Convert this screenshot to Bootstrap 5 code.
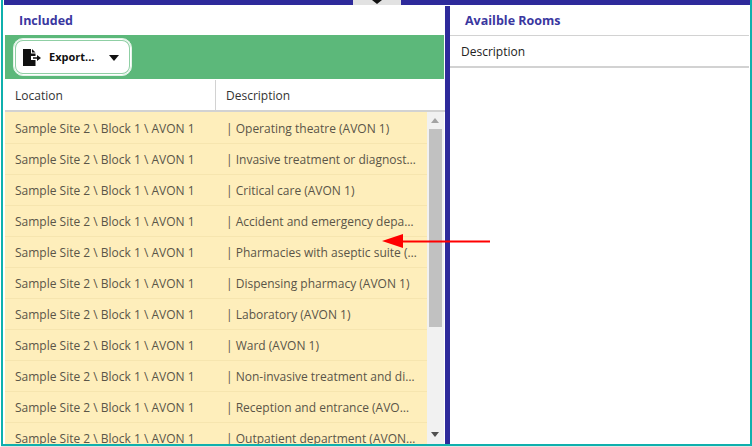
<!DOCTYPE html>
<html><head><meta charset="utf-8">
<link href="https://cdn.jsdelivr.net/npm/bootstrap@5.3.0/dist/css/bootstrap.min.css" rel="stylesheet">
<style>
html,body{height:447px;overflow:hidden;background:#fff}
body{font-family:"Open Sans","Noto Sans",sans-serif;font-size:12px;color:#333}
.frame{width:752px;height:447px;position:relative;background:#fff;border-left:2px solid #fff;border-bottom:1px solid #e4e4e4}
.inner{height:446px;border-left:2px solid #0fb0ad;border-right:2px solid #0fb0ad;border-bottom:2px solid #0fb0ad;margin-left:-1px;display:flex;flex-direction:column}
.topbar{height:5px;background:#2e2a9b;flex:none;margin-left:1px}
.handle{position:absolute;left:351px;top:0;width:48px;height:5px;background:#e2e2e2;overflow:hidden}
.handle i{position:absolute;left:19px;top:0;border:5px solid transparent;border-top:4px solid #111;border-bottom:0}
.panes{flex:1;min-height:0;display:flex}
.leftp{width:442px;padding-left:2px;flex:none;display:flex;flex-direction:column;min-height:0}
.sep{width:5px;background:#2e2a9b;flex:none;margin-top:1px}
.rightp{flex:1;min-width:0;padding-right:1px}
.ttl{height:30px;padding-top:3px;font-size:12.5px;font-weight:700;color:#3a37a0;display:flex;align-items:center;padding-left:14px;flex:none}
.rightp .ttl{padding-left:15px;border-bottom:1px solid #d2d2d2;height:31px;padding-top:2px}
.greenb{height:44px;background:#5cb87a;flex:none;display:flex;align-items:center;padding-left:8px;margin-right:1px}
.expbtn{width:119px;height:38px;background:#fff;border:1px solid #e4f3e9;border-radius:10px;display:flex;align-items:center;padding:1px 0 0 9px;font-size:11px;font-weight:700;color:#111;box-shadow:inset 0 0 0 1px #fff,inset 0 0 0 2px #8fcfa4}
.expbtn span{margin-left:8px}
.expbtn i{margin-left:15px;border:5.5px solid transparent;border-top:6px solid #111;border-bottom:0}
.hdr{height:32px;margin-top:1px;display:flex;border-bottom:2px solid #d2d2d2;flex:none;color:#333}
.hdr div{display:flex;align-items:center;padding-left:10px;padding-top:2px}
.hdr .c1{width:211px;border-right:1px solid #d2d2d2}
.bodyw{flex:1;min-height:0;display:flex;overflow:hidden}
.rows{flex:1;min-width:0;overflow:hidden;background:#feeebb;padding-top:1px}
.rw{height:31px;padding-top:2px;border-bottom:1px solid #f6e5af;display:flex;align-items:center;color:#5a5548}
.rw .c1{width:210px;padding-left:10px;flex:none;white-space:nowrap}
.rw .c2{flex:1;min-width:0;padding-left:11px;padding-right:10px;white-space:nowrap;overflow:hidden;text-overflow:ellipsis}
.sb{width:18px;flex:none;background:#f1f1f1;position:relative;border-right:1px solid #fff}
.sb .th{position:absolute;left:2px;right:2px;top:17px;height:198px;background:#c1c1c1}
.sb .up,.sb .dn{position:absolute;left:4px;border:4px solid transparent}
.sb .up{top:6px;border-top:0;border-bottom:5px solid #a3a3a3}
.sb .dn{bottom:7px;border-bottom:0;border-top:5px solid #505050}
.rhdr{height:32px;padding-top:1px;border-bottom:2px solid #d2d2d2;display:flex;align-items:center;padding-left:11px;color:#222}
.arrow{position:absolute;left:378px;top:232px;width:112px;height:18px;pointer-events:none}
</style></head><body>
<div class="frame"><div class="inner">
<div class="topbar"></div>
<div class="panes">
<div class="leftp">
<div class="ttl">Included</div>
<div class="greenb"><div class="expbtn">
<svg width="18" height="17" viewBox="0 0 18 17"><path d="M0 0h8v4.500h4.500V7H8v4h4.500v6H0z" fill="#111"/><path d="M9 0l3.500 3.500H9z" fill="#111"/><path d="M10 8.300h4V6l4 3-4 3V9.700h-4z" fill="#111"/></svg>
<span>Export...</span><i></i></div></div>
<div class="hdr"><div class="c1">Location</div><div class="c2">Description</div></div>
<div class="bodyw"><div class="rows" id="rows"></div><div class="sb"><div class="up"></div><div class="th"></div><div class="dn"></div></div></div>
</div>
<div class="sep"></div>
<div class="rightp"><div class="ttl">Availble Rooms</div><div class="rhdr">Description</div></div>
</div>
</div>
<div class="handle"><i></i></div>
<svg class="arrow" viewBox="0 0 112 18"><path d="M110 9.500H20" stroke="#f00" stroke-width="2"/><path d="M2 9 23 2v14z" fill="#f00"/></svg>
</div>
<script>
var d=["Operating theatre (AVON 1)","Invasive treatment or diagnostic area (AVON 1)","Critical care (AVON 1)","Accident and emergency department (AVON 1)","Pharmacies with aseptic suite (AVON 1)","Dispensing pharmacy (AVON 1)","Laboratory (AVON 1)","Ward (AVON 1)","Non-invasive treatment and diagnostic (AVON 1)","Reception and entrance (AVON 1)","Outpatient department (AVON 1)"];
document.getElementById('rows').innerHTML=d.map(function(t){return '<div class="rw"><div class="c1">Sample Site 2 \\ Block 1 \\ AVON 1</div><div class="c2">| '+t+'</div></div>'}).join('');
</script>
<script src="https://cdn.jsdelivr.net/npm/bootstrap@5.3.0/dist/js/bootstrap.bundle.min.js"></script>
</body></html>
